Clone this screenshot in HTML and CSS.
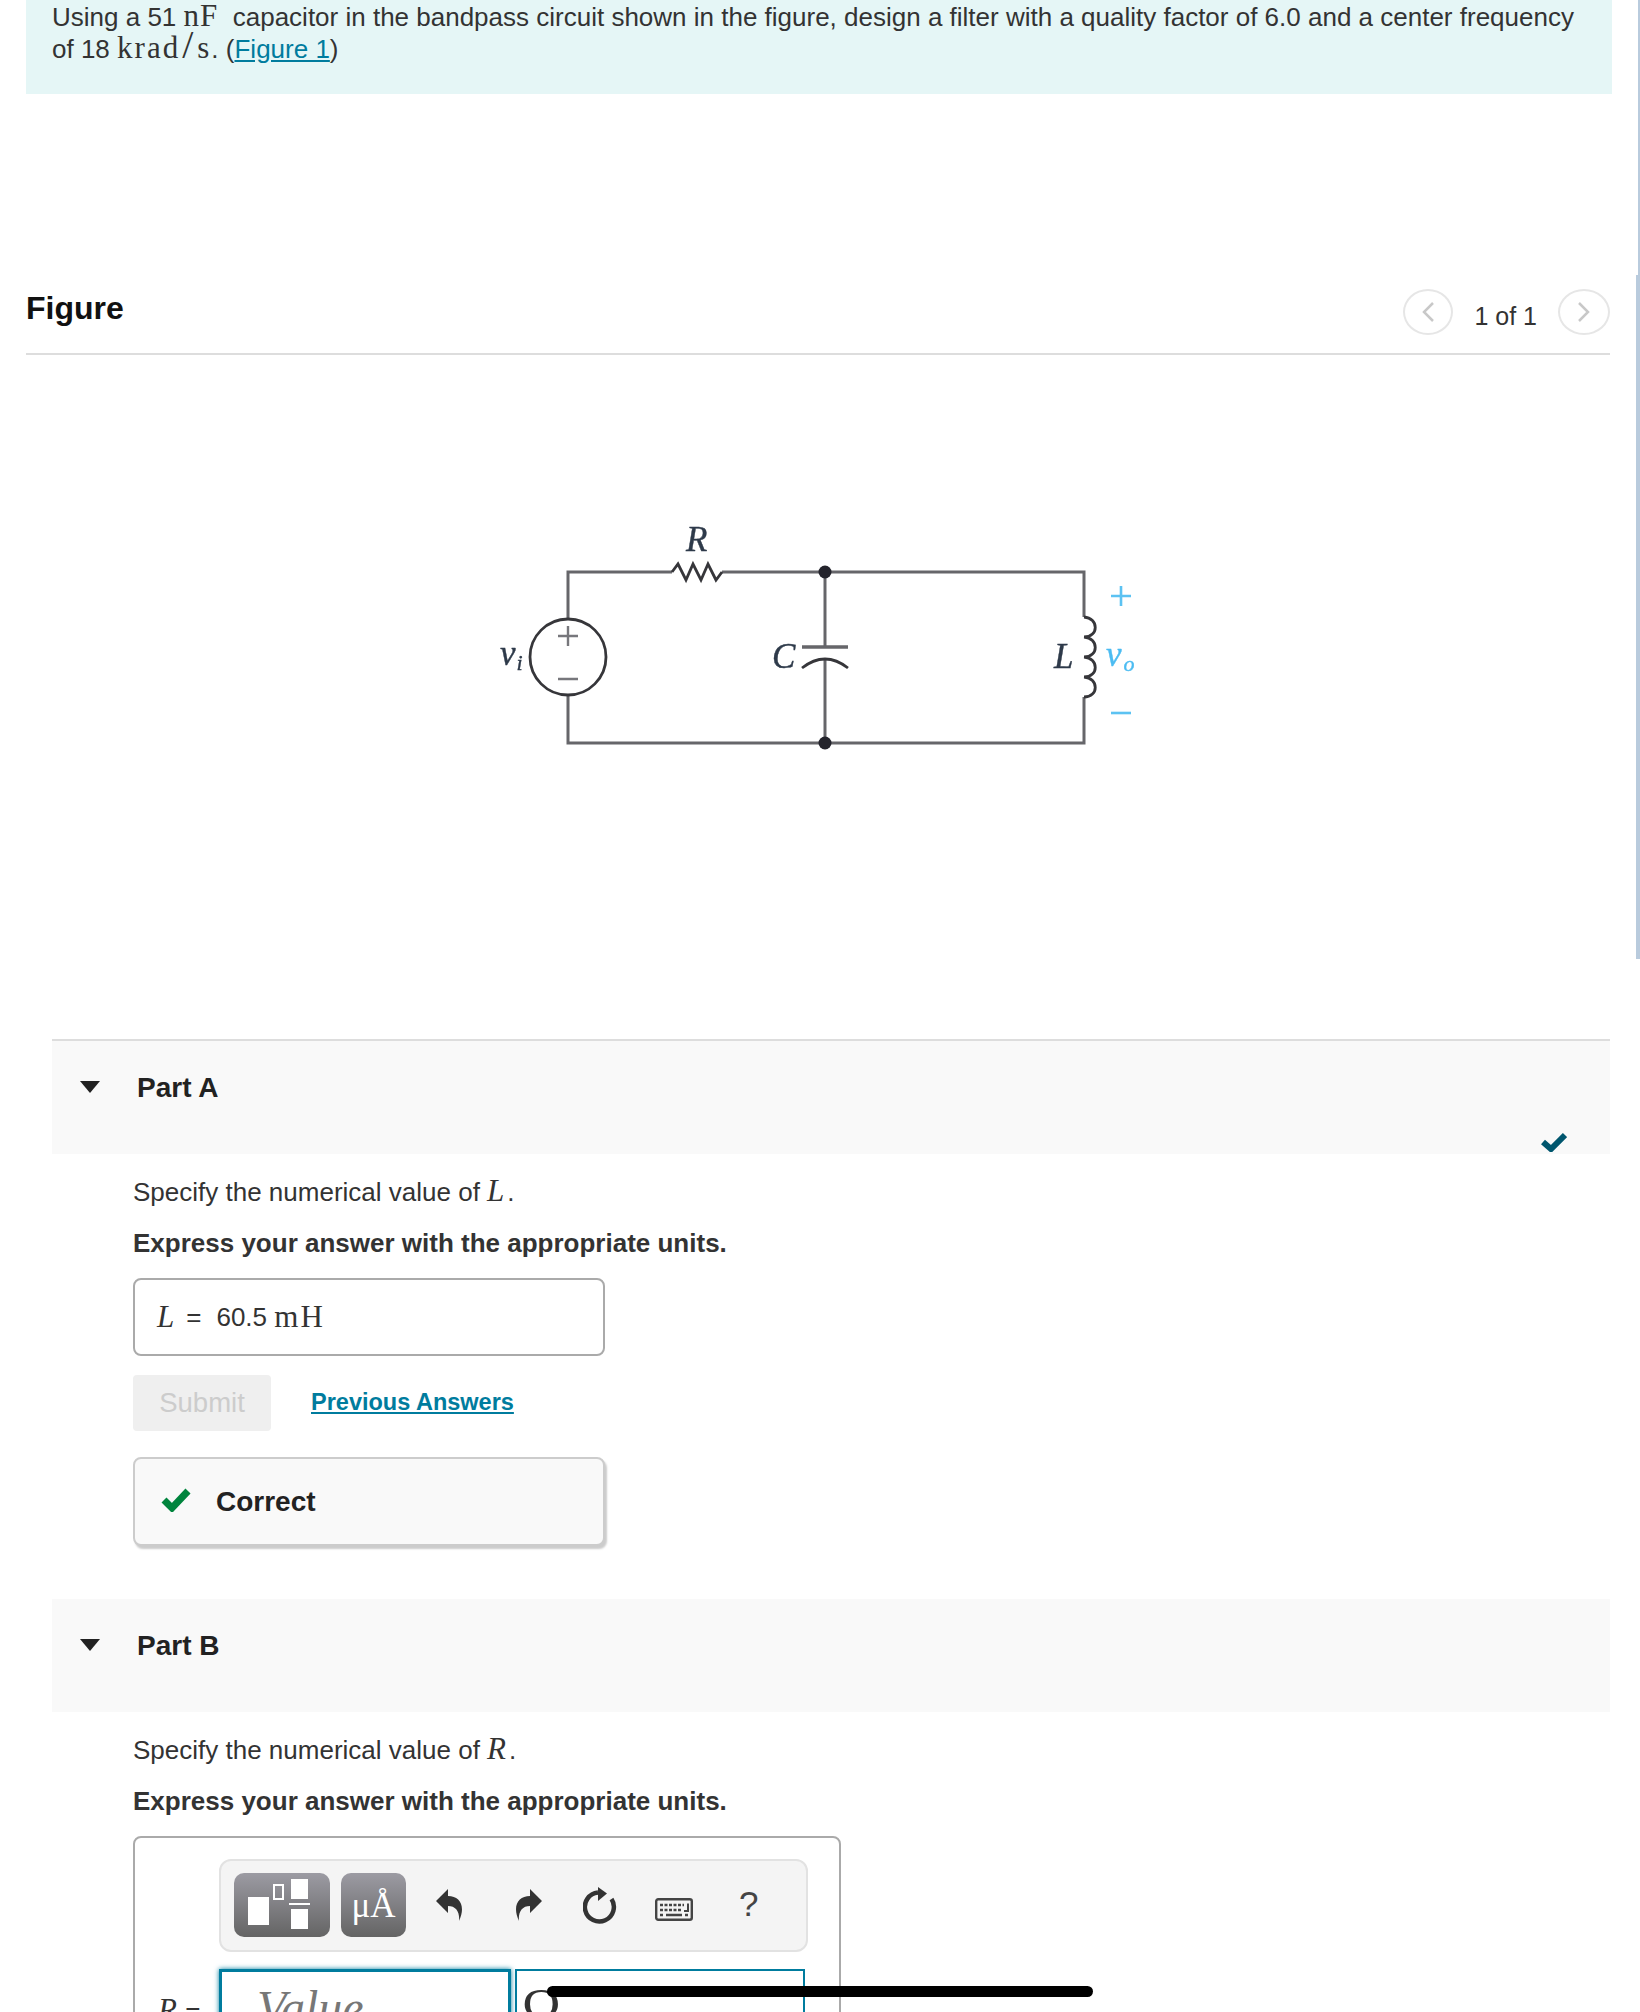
FILE: index.html
```html
<!DOCTYPE html>
<html lang="en">
<head>
  <meta charset="UTF-8">
  <meta name="viewport" content="width=device-width, initial-scale=1.0">
  <title>Bandpass filter design</title>
  <link rel="stylesheet" href="styles.css">
</head>
<body>

  <div class="scrollbar-thin"></div>
  <div class="scrollbar-thumb"></div>

  <!-- problem statement -->
  <div class="intro">
    <p>Using a 51 <span class="math">nF</span>&nbsp; capacitor in the bandpass circuit shown in the figure, design a filter with a quality factor of 6.0 and a center frequency of 18 <span class="math math-wide">krad<span class="slash">/</span>s</span>. (<a href="#figure">Figure 1</a>)</p>
  </div>

  <!-- figure -->
  <div class="figure-head" id="figure">
    <h2>Figure</h2>
    <div class="pager">
      <span class="pager-btn">
        <svg width="14" height="22" viewBox="0 0 14 22"><path d="M12 2 L3 11 L12 20" fill="none" stroke="#c8c8c8" stroke-width="2.5"/></svg>
      </span>
      <span class="pager-text">1 of 1</span>
      <span class="pager-btn pager-btn-next">
        <svg width="14" height="22" viewBox="0 0 14 22"><path d="M2 2 L11 11 L2 20" fill="none" stroke="#c8c8c8" stroke-width="2.5"/></svg>
      </span>
    </div>
  </div>

  <div class="figure-view">
    <svg class="circuit" width="680" height="260" viewBox="478 510 680 260">
      <g fill="none" stroke="#66666a" stroke-width="3">
        <path d="M568 619 V572 H672"/>
        <path d="M722 572 H1084 V617"/>
        <path d="M1084 697 V743 H568 V695"/>
        <path d="M825 572 V647"/>
        <path d="M825 660 V743"/>
        <path d="M802 647 H848" stroke-width="3.4"/>
      </g>
      <g fill="none" stroke="#36363a" stroke-width="2.8">
        <circle cx="568" cy="657" r="38"/>
        <path d="M672 572 L678 564 L686 580 L693 564 L701 580 L708 564 L716 580 L722 572"/>
        <path d="M802 668 Q825 650 848 668"/>
        <path d="M1084 617 C1099 618 1099 637 1084 637 C1099 638 1099 657 1084 657 C1099 658 1099 677 1084 677 C1099 678 1099 697 1084 697"/>
      </g>
      <g fill="#24242c">
        <circle cx="825" cy="572" r="6.5"/>
        <circle cx="825" cy="743" r="6.5"/>
      </g>
      <path d="M558 636 H578 M568 626 V646 M558 679 H578" stroke="#77777c" stroke-width="2.4" fill="none"/>
      <path d="M1111 596 H1131 M1121 586 V606" stroke="#5cc2f2" stroke-width="2.6" fill="none"/>
      <path d="M1111 713 H1131" stroke="#5cc2f2" stroke-width="2.6" fill="none"/>
      <text class="sym" x="686" y="551">R</text>
      <text class="sym" x="500" y="665">v<tspan class="sub" dx="1" dy="5">i</tspan></text>
      <text class="sym" x="772" y="668">C</text>
      <text class="sym" x="1054" y="668">L</text>
      <text class="sym sym-blue" x="1106" y="666">v<tspan class="sub" dx="2" dy="5">o</tspan></text>
    </svg>
  </div>

  <!-- part A -->
  <div class="part">
    <div class="part-head part-head-first">
      <span class="caret"></span>
      <h3>Part A</h3>
      <svg class="done-check" width="26" height="20" viewBox="0 0 26 20"><path d="M2 10 L10 17 L24 3" fill="none" stroke="#00566e" stroke-width="6"/></svg>
    </div>
    <div class="part-body">
      <p class="ask ask-first">Specify the numerical value of <span class="math math-sym"><i>L</i></span>.</p>
      <p class="ask"><b>Express your answer with the appropriate units.</b></p>
      <div class="answer-done">
        <span class="math"><i>L</i></span><span class="eq">=</span>60.5 <span class="math math-wide">mH</span>
      </div>
      <div class="actions">
        <button class="submit" disabled>Submit</button>
        <a class="prev" href="#">Previous Answers</a>
      </div>
      <div class="feedback">
        <svg class="feedback-check" width="30" height="24" viewBox="0 0 30 24"><path d="M3 12 L11 20 L27 3" fill="none" stroke="#00843d" stroke-width="7"/></svg>
        <b>Correct</b>
      </div>
    </div>
  </div>

  <!-- part B -->
  <div class="part part-b">
    <div class="part-head">
      <span class="caret"></span>
      <h3>Part B</h3>
    </div>
    <div class="part-body">
      <p class="ask ask-first">Specify the numerical value of <span class="math math-sym"><i>R</i></span>.</p>
      <p class="ask"><b>Express your answer with the appropriate units.</b></p>
      <div class="answer-box">
        <div class="toolbar">
          <span class="tool tool-wide">
            <svg width="96" height="64" viewBox="0 0 96 64">
              <g fill="#fff">
                <rect x="14" y="24" width="21" height="28"/>
                <rect x="57" y="6" width="17" height="20"/>
                <rect x="55" y="30" width="21" height="2"/>
                <rect x="57" y="36" width="17" height="20"/>
              </g>
              <rect x="40" y="12" width="9" height="14" fill="none" stroke="#fff" stroke-width="2"/>
            </svg>
          </span>
          <span class="tool tool-units">μÅ</span>
          <svg class="icon icon-undo" width="30" height="32" viewBox="0 0 30 32"><path d="M1 12 L13 0 V7 C25 7 31 17 24 32 C25 23 21 17 13 17 V24 Z" fill="#333"/></svg>
          <svg class="icon icon-redo" width="30" height="32" viewBox="0 0 30 32"><path d="M29 12 L17 0 V7 C5 7 -1 17 6 32 C5 23 9 17 17 17 V24 Z" fill="#333"/></svg>
          <svg class="icon icon-reset" width="34" height="38" viewBox="0 0 34 38">
            <path d="M28.5 13 A14.5 14.5 0 1 1 15 6.5" fill="none" stroke="#333" stroke-width="4.5"/>
            <path d="M15 1 L24 7.5 L15 15 Z" fill="#333"/>
          </svg>
          <svg class="icon icon-keys" width="38" height="23" viewBox="0 0 38 23">
            <rect x="1.2" y="1.2" width="35.6" height="20.6" rx="2" fill="#f4f4f4" stroke="#444" stroke-width="2.4"/>
            <path d="M5 7 H29 M5 12 H27" stroke="#444" stroke-width="2.6" stroke-dasharray="3 1.5" fill="none"/>
            <path d="M33 5.5 V13 H29" stroke="#444" stroke-width="2" fill="none"/>
            <path d="M5 17 H8 M11 17 H27 M30 17 H33" stroke="#444" stroke-width="2.6" fill="none"/>
          </svg>
          <span class="help">?</span>
        </div>
        <div class="entry-row">
          <span class="entry-label"><span class="math"><i>R</i></span> =</span>
          <span class="entry-value math"><i>Value</i></span>
          <span class="entry-unit math">Ω</span>
        </div>
      </div>
    </div>
    <div class="redact-bar"></div>
  </div>

</body>
</html>
```

FILE: styles.css
```css
body {
  font-family: "Liberation Sans", Arial, sans-serif;
  font-size: 26px;
  line-height: 32px;
  color: #333;
  margin: 0;
  padding: 0 30px 0 26px;
  height: 2012px;
  overflow: hidden;
  position: relative;
  box-sizing: border-box;
  background-color: #fff;
}

a {
  color: #007c9e;
}

p {
  margin: 0;
}

.math {
  font-family: "Liberation Serif", "DejaVu Serif", serif;
  font-size: 31px;
  line-height: 20px;
  letter-spacing: 1px;
}

.math-wide {
  letter-spacing: 2px;
}

.math-sym {
  letter-spacing: 3px;
}

.slash {
  font-size: 40px;
  line-height: 20px;
  margin: 0 2px;
}

/* edge of the scrolling frame */
.scrollbar-thin {
  position: absolute;
  top: 0;
  right: 0;
  width: 2px;
  height: 275px;
  background-color: #b9cbdd;
}

.scrollbar-thumb {
  position: absolute;
  top: 275px;
  right: 0;
  width: 4px;
  height: 684px;
  background-color: #b9cbdd;
}

.intro {
  background-color: #e5f6f6;
  height: 94px;
  margin-right: -2px;
  padding: 1px 24px 0 26px;
  box-sizing: border-box;
}

.figure-head {
  display: flex;
  justify-content: space-between;
  align-items: flex-start;
  padding-top: 194px;
  height: 261px;
  box-sizing: border-box;
  border-bottom: 2px solid #ddd;
}

.figure-head h2 {
  font-size: 32px;
  line-height: 40px;
  margin: 0;
  color: #111;
}

.pager {
  display: flex;
  align-items: center;
  gap: 21px;
  margin-top: 1px;
}

.pager-btn {
  width: 50px;
  height: 46px;
  border: 2px solid #e6e6e6;
  border-radius: 50%;
  box-sizing: border-box;
  display: flex;
  justify-content: center;
  align-items: center;
}

.pager-btn-next {
  width: 52px;
}

.pager-text {
  margin-top: 7px;
  font-size: 25px;
}

.figure-view {
  height: 684px;
  padding-top: 155px;
  box-sizing: border-box;
}

.circuit {
  display: block;
  margin: 0 auto;
  filter: blur(0.6px);
}

.sym {
  font-family: "Liberation Serif", serif;
  font-style: italic;
  font-size: 35px;
  fill: #2e3a4a;
  stroke: #2e3a4a;
  stroke-width: 0.4;
}

.sym-blue {
  fill: #4cbcf2;
  stroke: #4cbcf2;
}

.sub {
  font-size: 22px;
}

.part {
  margin-left: 26px;
  position: relative;
}

.part-head {
  background-color: #f9f9f9;
  height: 113px;
  display: flex;
  align-items: flex-start;
  position: relative;
}

.part-head-first {
  border-top: 2px solid #ddd;
}

.part-head h3 {
  margin: 29px 0 0 37px;
  font-size: 28px;
  line-height: 36px;
  color: #222;
}

.caret {
  width: 0;
  height: 0;
  margin: 40px 0 0 28px;
  border-left: 10.5px solid transparent;
  border-right: 10.5px solid transparent;
  border-top: 12px solid #222;
}

.done-check {
  position: absolute;
  right: 43px;
  bottom: 2px;
}

.part-body {
  padding: 21px 0 0 81px;
}

.ask {
  margin-bottom: 20px;
}

.ask-first {
  padding-top: 1px;
  margin-bottom: 19px;
}

.answer-done {
  width: 472px;
  height: 78px;
  margin-top: -1px;
  box-sizing: border-box;
  border: 2px solid #aaa;
  border-radius: 8px;
  padding-left: 22px;
  display: flex;
  align-items: center;
  white-space: pre;
}

.eq {
  margin: 0 15px 0 11px;
}

.actions {
  display: flex;
  align-items: center;
  gap: 40px;
  margin-top: 19px;
}

.submit {
  width: 138px;
  height: 56px;
  background-color: #efefef;
  color: #ccc;
  border: none;
  border-radius: 4px;
  font-family: inherit;
  font-size: 27.5px;
}

.prev {
  font-size: 23.5px;
  font-weight: bold;
  margin-top: -2px;
}

.feedback {
  width: 472px;
  height: 89px;
  box-sizing: border-box;
  margin-top: 26px;
  background-color: #f9f9f9;
  border: 2px solid #ccc;
  border-radius: 8px;
  box-shadow: 2px 3px 2px #ccc;
  display: flex;
  align-items: center;
  gap: 25px;
  padding-left: 26px;
  font-size: 28px;
  color: #222;
}

.feedback-check {
  margin-top: -4px;
}

.part-b {
  margin-top: 53px;
}

.answer-box {
  width: 708px;
  height: 300px;
  margin-top: -1px;
  box-sizing: border-box;
  border: 2px solid #aaa;
  border-radius: 8px;
  padding: 21px 0 0 84px;
}

.toolbar {
  width: 589px;
  height: 93px;
  box-sizing: border-box;
  background-color: #f4f4f4;
  border: 2px solid #e2e2e2;
  border-radius: 12px;
  padding: 0 0 2px 13px;
  display: flex;
  align-items: center;
}

.tool {
  height: 64px;
  border-radius: 10px;
  background: linear-gradient(#9c9ba3, #646464);
  display: flex;
  justify-content: center;
  align-items: center;
}

.tool-wide {
  width: 96px;
}

.tool-units {
  width: 65px;
  margin-left: 11px;
  color: #fff;
  font-family: "Liberation Serif", serif;
  font-size: 35px;
  padding-top: 3px;
  height: 61px;
}

.icon-undo {
  margin-left: 29px;
}

.icon-redo {
  margin-left: 48px;
}

.icon-reset {
  margin-left: 40px;
}

.icon-keys {
  margin: 9px 0 0 38px;
}

.help {
  margin: -2px 0 0 46px;
  font-size: 35px;
  color: #444;
}

.entry-row {
  display: flex;
  align-items: flex-start;
  margin-top: 17px;
  margin-left: -84px;
}

.entry-label {
  width: 84px;
  padding: 26px 0 0 23px;
  box-sizing: border-box;
  white-space: nowrap;
}

.entry-value {
  width: 292px;
  height: 120px;
  box-sizing: border-box;
  border: 3px solid #007c9e;
  box-shadow: 0 0 5px #007c9e;
  padding: 10px 0 0 35px;
  font-size: 48px;
  line-height: 52px;
  letter-spacing: 0;
  color: #777;
}

.entry-unit {
  width: 290px;
  height: 120px;
  margin-left: 4px;
  box-sizing: border-box;
  border: 2px solid #007c9e;
  padding: 11px 0 0 5px;
  font-size: 52px;
  line-height: 52px;
  color: #333;
}

/* black stroke drawn over the bottom of the screenshot */
.redact-bar {
  position: absolute;
  left: 495px;
  top: 387px;
  width: 546px;
  height: 11px;
  background-color: #000;
  border-radius: 6px;
}
```
